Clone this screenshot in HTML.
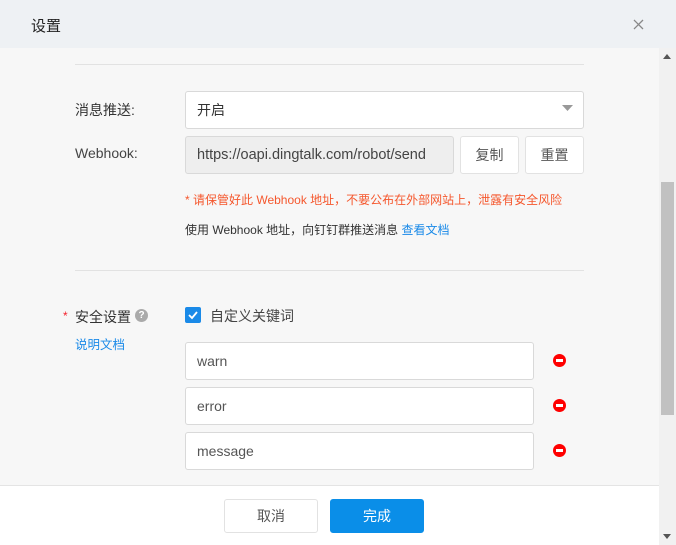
<!DOCTYPE html>
<html><head><meta charset="utf-8"><style>
*{box-sizing:border-box;margin:0;padding:0}
body{width:676px;height:545px;position:relative;overflow:hidden;background:#f7f7f7;font-family:"Liberation Sans","Noto Sans CJK SC",sans-serif;font-size:13px;color:#333}
.a{position:absolute}
.hdr{left:0;top:0;width:676px;height:48px;background:#eef1f4}
.inp{background:#fff;border:1px solid #d9d9d9;border-radius:3px;font-size:14px;color:#555;padding-left:11px;display:flex;align-items:center}
.btn{background:#fff;border:1px solid #e2e2e2;border-radius:3px;font-size:14px;color:#555;display:flex;align-items:center;justify-content:center}
.line{height:1px;background:#e2e2e2;left:75px;width:509px}
.minus{width:13px;height:13px;border-radius:50%;background:#f00}
.minus:after{content:"";position:absolute;left:3px;top:5px;width:7px;height:3px;background:#fff}
</style></head><body>
<div class="a hdr"></div>
<div class="a" style="left:31px;top:15px;font-size:15px;color:#222">设置</div>
<svg class="a" style="left:633px;top:19px" width="11" height="11"><path d="M1 1L10 10M10 1L1 10" stroke="#888" stroke-width="1.3"/></svg>
<div class="a" style="left:659px;top:48px;width:17px;height:497px;background:#f1f1f1"></div>
<div class="a" style="left:661px;top:182px;width:13px;height:233px;background:#c1c1c1"></div>
<svg class="a" style="left:662px;top:53px" width="10" height="8"><path d="M1 6L5 1L9 6Z" fill="#555"/></svg>
<svg class="a" style="left:662px;top:532px" width="10" height="8"><path d="M1 2L5 7L9 2Z" fill="#555"/></svg>
<div class="a line" style="top:64px"></div>
<div class="a" style="left:75px;top:100px;font-size:14px;color:#333">消息推送:</div>
<div class="a inp" style="left:185px;top:91px;width:399px;height:38px;color:#333">开启</div>
<svg class="a" style="left:562px;top:105px" width="11" height="7"><path d="M0 0L11 0L5.5 6Z" fill="#999"/></svg>
<div class="a" style="left:75px;top:145px;font-size:14px;color:#444">Webhook:</div>
<div class="a inp" style="left:185px;top:136px;width:269px;height:38px;background:#eee;overflow:hidden;white-space:nowrap;color:#444;font-size:14.5px"><span style="display:block;width:245px;overflow:hidden">https://oapi.dingtalk.com/robot/send</span></div>
<div class="a btn" style="left:460px;top:136px;width:59px;height:38px">复制</div>
<div class="a btn" style="left:525px;top:136px;width:59px;height:38px">重置</div>
<div class="a" style="left:185px;top:191px;font-size:12px;color:#f5572d">* 请保管好此 Webhook 地址，不要公布在外部网站上，泄露有安全风险</div>
<div class="a" style="left:185px;top:221px;font-size:12px;color:#333">使用 Webhook 地址，向钉钉群推送消息 <span style="color:#1a8ae8">查看文档</span></div>
<div class="a line" style="top:270px"></div>
<div class="a" style="left:63px;top:309px;color:#f5222d;font-size:12px">*</div>
<div class="a" style="left:75px;top:307px;font-size:14px;color:#333">安全设置</div>
<div class="a" style="left:135px;top:309px;width:13px;height:13px;border-radius:50%;background:#aaa;color:#fff;font-size:10px;font-weight:bold;text-align:center;line-height:13px">?</div>
<div class="a" style="left:75px;top:334px;font-size:12.5px;color:#1a8ae8">说明文档</div>
<div class="a" style="left:185px;top:307px;width:16px;height:16px;background:#1a8ae8;border-radius:2px"></div>
<svg class="a" style="left:187px;top:309px" width="12" height="12"><path d="M2 6L5 9L10 3" stroke="#fff" stroke-width="1.8" fill="none"/></svg>
<div class="a" style="left:210px;top:306px;font-size:14px;color:#444">自定义关键词</div>
<div class="a inp" style="left:185px;top:342px;width:349px;height:38px">warn</div>
<div class="a inp" style="left:185px;top:387px;width:349px;height:38px">error</div>
<div class="a inp" style="left:185px;top:432px;width:349px;height:38px">message</div>
<div class="a minus" style="left:553px;top:354px"></div>
<div class="a minus" style="left:553px;top:399px"></div>
<div class="a minus" style="left:553px;top:444px"></div>
<div class="a" style="left:0;top:485px;width:659px;height:60px;background:#fff;border-top:1px solid #e4e4e4"></div>
<div class="a btn" style="left:224px;top:499px;width:94px;height:34px">取消</div>
<div class="a btn" style="left:330px;top:499px;width:94px;height:34px;background:#0a8ee8;border-color:#0a8ee8;color:#fff">完成</div>
</body></html>
